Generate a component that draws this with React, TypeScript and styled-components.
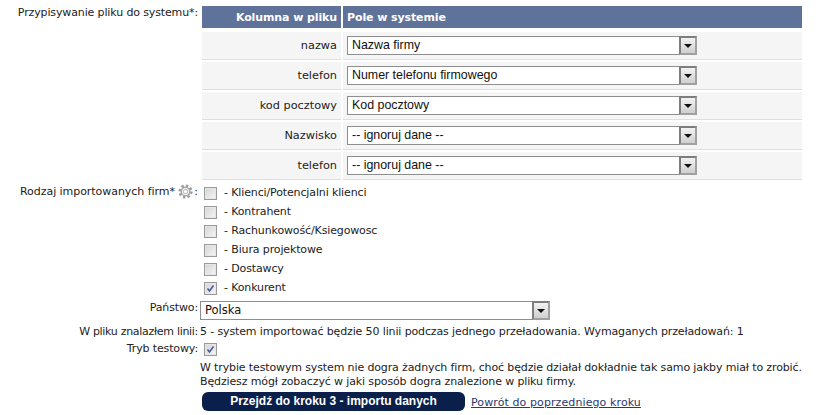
import React from 'react'
import styled, { createGlobalStyle } from 'styled-components'

const COLUMNS = [
  { name: 'nazwa', field: 'Nazwa firmy' },
  { name: 'telefon', field: 'Numer telefonu firmowego' },
  { name: 'kod pocztowy', field: 'Kod pocztowy' },
  { name: 'Nazwisko', field: '-- ignoruj dane --' },
  { name: 'telefon', field: '-- ignoruj dane --' },
]

const COMPANY_TYPES = [
  { label: 'Klienci/Potencjalni klienci', checked: false },
  { label: 'Kontrahent', checked: false },
  { label: 'Rachunkowość/Ksiegowosc', checked: false },
  { label: 'Biura projektowe', checked: false },
  { label: 'Dostawcy', checked: false },
  { label: 'Konkurent', checked: true },
]

const GlobalStyle = createGlobalStyle`
  html, body {
    margin: 0;
    background: #fff;
    color: #222;
    font-family: 'DejaVu Sans', Verdana, sans-serif;
    font-size: 11px;
    letter-spacing: -0.13px;
    overflow: hidden;
  }
`

const Form = styled.div`
  width: 816px;
  height: 415px;
  padding-top: 6px;
  box-sizing: border-box;
`

const Row = styled.div`
  display: grid;
  grid-template-columns: 198px 1fr;
  column-gap: 2px;
  min-height: 14px;
`

const Label = styled.div<{ $spacing?: number }>`
  text-align: right;
  line-height: 14px;
  white-space: nowrap;
  letter-spacing: ${({ $spacing }) => $spacing ?? -0.13}px;
`

const GearLabel = styled(Label)`
  margin-top: 1px;
  height: 17px;
`

const Table = styled.div`
  width: 600px;
  margin-left: 2px;
  display: grid;
  grid-template-columns: 139px 459px;
  column-gap: 2px;
`

const HeadCell = styled.div<{ $right?: boolean }>`
  background: #5f7299;
  color: #fff;
  font-weight: bold;
  font-size: 11px;
  letter-spacing: -0.1px;
  height: 22px;
  line-height: 23px;
  padding: 0 4px;
  margin-bottom: 4px;
  text-align: ${({ $right }) => ($right ? 'right' : 'left')};
`

const Cell = styled.div<{ $right?: boolean }>`
  background: #f5f5f5;
  border-bottom: 1px solid #dedede;
  height: 27px;
  margin-bottom: 2px;
  padding: 0 4px;
  display: flex;
  align-items: center;
  justify-content: ${({ $right }) => ($right ? 'flex-end' : 'flex-start')};
  font-size: 11.3px;
  letter-spacing: 0;
`

const SelectBox = styled.div<{ $wide?: boolean }>`
  width: 350px;
  height: 19px;
  box-sizing: border-box;
  border: 1px solid #8e8e8e;
  border-right: none;
  background: #fff;
  display: flex;
  align-items: stretch;
  justify-content: space-between;
  font-family: ${({ $wide }) => ($wide ? "'DejaVu Sans', Verdana" : "'Liberation Sans', Arial")}, sans-serif;
  font-size: ${({ $wide }) => ($wide ? 11.5 : 12.4)}px;
  letter-spacing: 0;
  line-height: 17px;
  padding-left: 4px;
  color: #111;
`

const SelectArrow = styled.div`
  width: 18px;
  height: 19px;
  margin-top: -1px;
  box-sizing: border-box;
  border: 2px solid #7d7d7d;
  border-bottom-color: #a0a0a0;
  border-right-color: #a0a0a0;
  background: linear-gradient(#f2f2f2, #cfcfcf);
  display: flex;
  align-items: center;
  justify-content: center;

  &::after {
    content: '';
    border-top: 4px solid #111;
    border-left: 4px solid transparent;
    border-right: 4px solid transparent;
    margin-top: 1px;
  }
`

const TypesRow = styled(Row)`
  margin-top: 1px;
`

const TypeList = styled.div`
  display: flex;
  flex-direction: column;
  padding-left: 4px;
`

const TypeItem = styled.div`
  display: flex;
  align-items: center;
  height: 19px;
  gap: 7px;
  white-space: nowrap;
`

const Box = styled.span`
  width: 13px;
  height: 13px;
  box-sizing: border-box;
  flex: none;
  border: 1px solid #9a9a9a;
  background: linear-gradient(135deg, #d4d4d4, #f6f6f6);
  box-shadow: inset 0 0 0 1px #e6e6e6;
  display: inline-flex;
  align-items: center;
  justify-content: center;
  margin-top: 2px;
`

const CountryRow = styled(Row)`
  margin-top: 4px;
`

const InfoRow = styled(Row)`
  margin-top: 5px;
`

const InfoText = styled.div`
  line-height: 14px;
  white-space: nowrap;
`

const TestRow = styled(Row)`
  margin-top: 3px;
`

const TestBox = styled.div`
  padding-left: 4px;
  height: 14px;
  display: flex;
  align-items: center;

  ${Box} {
    margin-top: 1px;
  }
`

const Note = styled.div`
  margin: 5px 0 0 200px;
  line-height: 14px;
  white-space: nowrap;
`

const Actions = styled.div`
  display: flex;
  align-items: center;
  margin: 3px 0 0 202px;
  gap: 6px;
`

const PrimaryButton = styled.div`
  width: 263px;
  height: 19px;
  border-radius: 6px;
  background: #0b1f4b;
  color: #fff;
  font-family: 'Liberation Sans', Arial, sans-serif;
  font-weight: bold;
  font-size: 12px;
  letter-spacing: 0;
  line-height: 19px;
  text-align: center;
`

const BackLink = styled.a`
  color: #2b3a6b;
  text-decoration: underline;
  letter-spacing: 0.1px;
  padding-top: 2px;
`

const GearIcon = styled.svg`
  vertical-align: -4px;
  margin: 0 1px 0 0;
`

const Check = () => (
  <svg width="9" height="9" viewBox="0 0 9 9">
    <path d="M1.5 4.5 L3.5 7 L7.5 1.5" fill="none" stroke="#4a5a9a" strokeWidth="1.6" />
  </svg>
)

const Gear = () => (
  <GearIcon width="15" height="15" viewBox="0 0 15 15">
    <circle cx="7.5" cy="7.5" r="5.8" fill="none" stroke="#9c9c9c" strokeWidth="2.6" strokeDasharray="2.4 2.1" />
    <circle cx="7.5" cy="7.5" r="4.3" fill="none" stroke="#a8a8a8" strokeWidth="1.6" />
    <circle cx="7.5" cy="7.5" r="2.2" fill="none" stroke="#c4c4c4" strokeWidth="1.2" />
  </GearIcon>
)

function Select({ value, wide }: { value: string; wide?: boolean }) {
  return (
    <SelectBox $wide={wide}>
      <span>{value}</span>
      <SelectArrow />
    </SelectBox>
  )
}

export default function App() {
  return (
    <Form>
      <GlobalStyle />
      <Row>
        <Label>Przypisywanie pliku do systemu*:</Label>
        <Table>
          <HeadCell $right>Kolumna w pliku</HeadCell>
          <HeadCell>Pole w systemie</HeadCell>
          {COLUMNS.map((column, i) => (
            <React.Fragment key={i}>
              <Cell $right>{column.name}</Cell>
              <Cell>
                <Select value={column.field} />
              </Cell>
            </React.Fragment>
          ))}
        </Table>
      </Row>
      <TypesRow>
        <GearLabel $spacing={-0.05}>
          Rodzaj importowanych firm* <Gear />:
        </GearLabel>
        <TypeList>
          {COMPANY_TYPES.map((type) => (
            <TypeItem key={type.label}>
              <Box>{type.checked && <Check />}</Box>
              <span>- {type.label}</span>
            </TypeItem>
          ))}
        </TypeList>
      </TypesRow>
      <CountryRow>
        <Label>Państwo:</Label>
        <Select value="Polska" wide />
      </CountryRow>
      <InfoRow>
        <Label $spacing={-0.3}>W pliku znalazłem linii:</Label>
        <InfoText>5 - system importować będzie 50 linii podczas jednego przeładowania. Wymaganych przeładowań: 1</InfoText>
      </InfoRow>
      <TestRow>
        <Label>Tryb testowy:</Label>
        <TestBox>
          <Box>
            <Check />
          </Box>
        </TestBox>
      </TestRow>
      <Note>
        W trybie testowym system nie dogra żadnych firm, choć będzie działał dokładnie tak samo jakby miał to zrobić.
        <br />
        Będziesz mógł zobaczyć w jaki sposób dogra znalezione w pliku firmy.
      </Note>
      <Actions>
        <PrimaryButton>Przejdź do kroku 3 - importu danych</PrimaryButton>
        <BackLink>Powrót do poprzedniego kroku</BackLink>
      </Actions>
    </Form>
  )
}
